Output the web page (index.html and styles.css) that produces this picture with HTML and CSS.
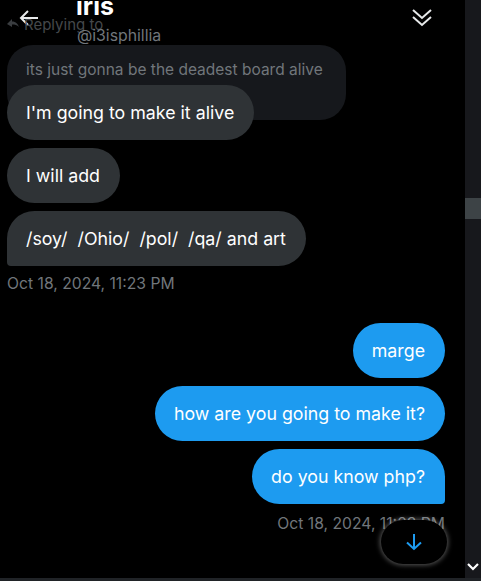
FILE: index.html
```html
<!DOCTYPE html>
<html>
<head>
<meta charset="utf-8">
<link rel="stylesheet" href="styles.css">
</head>
<body>
<div class="window">
  <main class="main">
    <div class="thread">
      <div class="quoted">its just gonna be the deadest board alive</div>
      <div class="group in">
        <div class="bubble gray first">I'm going to make it alive</div>
        <div class="bubble gray">I will add</div>
        <div class="bubble gray last">/soy/&nbsp; /Ohio/&nbsp; /pol/&nbsp; /qa/ and art</div>
      </div>
      <div class="stamp">Oct 18, 2024, 11:23 PM</div>
      <div class="group out">
        <div class="bubble blue">marge</div>
        <div class="bubble blue">how are you going to make it?</div>
        <div class="bubble blue last">do you know php?</div>
      </div>
      <div class="stamp right">Oct 18, 2024, 11:23 PM</div>
    </div>

    <header class="header">
      <svg class="back" width="20" height="16" viewBox="0 0 20 16"><path d="M9 1 L2 8 L9 15 M2 8 H19" fill="none" stroke="#e7e9ea" stroke-width="2"/></svg>
      <svg class="reply-icon" width="12" height="10" viewBox="0 0 12 10"><path d="M0 6 L5 1 L5 3.5 C9 3.5 11 6 12 9 C10 7 8 6.5 5 6.5 L5 9 Z" fill="#3a3d40"/></svg>
      <span class="replying">Replying to</span>
      <div class="name">iris</div>
      <div class="handle">@i3isphillia</div>
      <svg class="chev" width="22" height="20" viewBox="0 0 22 20"><path d="M2 2 L11 10 L20 2 M2 9 L11 17 L20 9" fill="none" stroke="#e7e9ea" stroke-width="2"/></svg>
    </header>

    <button class="down-btn" aria-label="scroll down">
      <svg width="18" height="18" viewBox="0 0 18 18"><path d="M9 1 V16 M2 9.5 L9 16 L16 9.5" fill="none" stroke="#1d9bf0" stroke-width="2"/></svg>
    </button>
  </main>
  <div class="scrollbar">
    <div class="thumb"></div>
    <svg class="sb-arrow" width="12" height="8" viewBox="0 0 12 8"><path d="M1 1 L6 6 L11 1" fill="none" stroke="#ffffff" stroke-width="2.2"/></svg>
  </div>
</div>
<div class="hbar"></div>
</body>
</html>
```

FILE: styles.css
```css
* { box-sizing: border-box; }
html, body {
  margin: 0;
  padding: 0;
  background: #000;
  height: 100%;
  overflow: hidden;
}
body {
  font-family: Inter, "Open Sans", sans-serif;
  color: #e7e9ea;
}
.window {
  display: flex;
  height: 578px;
}
.main {
  position: relative;
  width: 465px;
  overflow: hidden;
}
.thread {
  padding: 45px 20px 0 7px;
  display: flex;
  flex-direction: column;
}
.quoted {
  width: 339px;
  height: 75px;
  background: #16181c;
  border-radius: 26px;
  padding: 15px 19px;
  font-size: 15.5px;
  color: #71767b;
  line-height: 20px;
}
.group {
  display: flex;
  flex-direction: column;
  gap: 8px;
}
.group.in {
  margin-top: -35px;
  align-items: flex-start;
}
.group.out {
  align-items: flex-end;
  margin-top: 30px;
}
.bubble {
  height: 55px;
  border-radius: 28px;
  padding: 0 20px 0 19px;
  display: flex;
  align-items: center;
  font-size: 17.8px;
  color: #fff;
  white-space: nowrap;
}
.bubble.gray { background: #2f3336; }
.bubble.gray.last { border-bottom-left-radius: 4px; }
.bubble.blue { background: #1d9bf0; }
.bubble.blue.last { border-bottom-right-radius: 4px; }
.stamp {
  margin-top: 9px;
  font-size: 15.7px;
  color: #71767b;
  line-height: 18px;
}
.stamp.right {
  align-self: flex-end;
  margin-top: 11px;
}
.header {
  position: absolute;
  top: 0;
  left: 0;
  right: 0;
  height: 46px;
}
.back { position: absolute; left: 19px; top: 10px; }
.reply-icon { position: absolute; left: 7px; top: 18px; }
.replying {
  position: absolute;
  left: 24px;
  top: 15px;
  font-size: 15px;
  color: #45484b;
}
.name {
  position: absolute;
  left: 76px;
  top: -9px;
  font-size: 25px;
  font-weight: 700;
  color: #fff;
  line-height: 30px;
}
.handle {
  position: absolute;
  left: 77px;
  top: 26px;
  font-size: 15.8px;
  color: #71767b;
}
.chev { position: absolute; left: 411px; top: 8px; }
.down-btn {
  position: absolute;
  left: 381px;
  top: 520px;
  width: 66px;
  height: 44px;
  border-radius: 22px;
  border: none;
  background: #000;
  box-shadow: 0 0 5px 1px rgba(255,255,255,0.35);
  display: flex;
  align-items: center;
  justify-content: center;
  padding: 0;
}
.scrollbar {
  position: relative;
  width: 16px;
  background: #17181c;
  display: flex;
  flex-direction: column;
  align-items: center;
}
.thumb {
  margin-top: 198px;
  width: 16px;
  height: 21px;
  background: #3d4346;
}
.sb-arrow { margin-top: auto; margin-bottom: 7px; }
.hbar {
  height: 3px;
  background: #202327;
}
```
